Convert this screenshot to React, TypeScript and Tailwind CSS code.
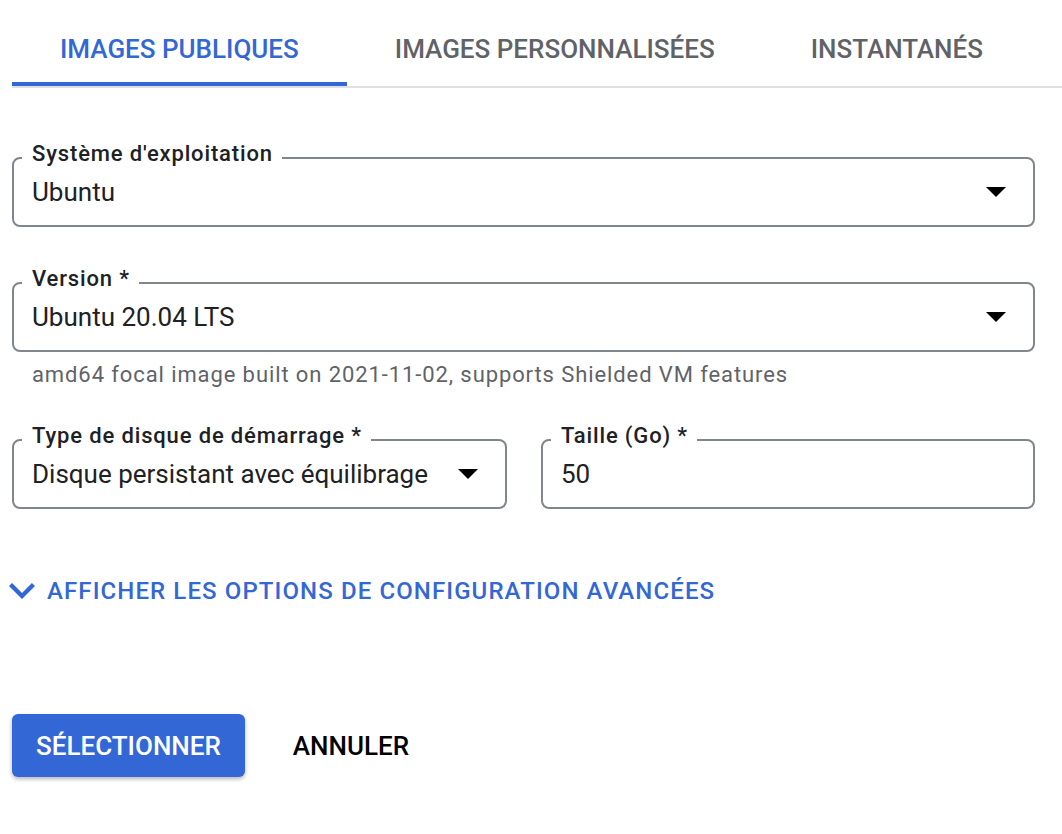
import React from "react";

function Caret() {
  return (
    <svg width="20" height="10" viewBox="0 0 20 10" className="shrink-0">
      <polygon points="0,0 20,0 10,10" fill="#000000" />
    </svg>
  );
}

function Field({ label, value, select }: { label: string; value: string; select?: boolean }) {
  return (
    <div className="relative h-[70px] rounded-[8px] border-2 border-[#80868b] flex items-center pl-[18px] pr-[27px]">
      <span className="absolute left-[8px] top-[-18px] bg-white px-[10px] pr-[9px] text-[22px] leading-[26px] tracking-[0.85px] font-medium text-[#202124] whitespace-nowrap">
        {label}
      </span>
      <span className="flex-1 text-[26px] leading-[30px] text-[#202124] whitespace-nowrap">{value}</span>
      {select && <Caret />}
    </div>
  );
}

export default function App() {
  const tabs = ["IMAGES PUBLIQUES", "IMAGES PERSONNALISÉES", "INSTANTANÉS"];
  return (
    <div className="w-[1062px] h-[834px] bg-white overflow-hidden font-['Roboto',_'Liberation_Sans',_sans-serif]">
      <div className="ml-3 flex border-b-2 border-[#e0e0e0]">
        {tabs.map((t, i) => (
          <div
            key={t}
            className={
              i === 0
                ? "px-12 pt-[34px] pb-[18px] border-b-4 border-[#3367d6] text-[26px] leading-[30px] font-medium text-[#3367d6] whitespace-nowrap"
                : "px-12 pt-[34px] pb-[18px] border-b-4 border-transparent text-[26px] leading-[30px] font-medium text-[#5f6368] whitespace-nowrap"
            }
          >
            {t}
          </div>
        ))}
      </div>

      <div className="ml-3 w-[1023px] mt-[69px] flex flex-col">
        <Field label="Système d'exploitation" value="Ubuntu" select />
        <div className="mt-[55px]">
          <Field label="Version *" value="Ubuntu 20.04 LTS" select />
        </div>
        <div className="mt-[10px] pl-5 text-[22px] leading-[26px] tracking-[0.9px] text-[#5f6368] whitespace-nowrap">
          amd64 focal image built on 2021-11-02, supports Shielded VM features
        </div>
        <div className="mt-[51px] grid grid-cols-[495px_494px] gap-x-[34px]">
          <Field label="Type de disque de démarrage *" value="Disque persistant avec équilibrage" select />
          <Field label="Taille (Go) *" value="50" />
        </div>

        <div className="mt-[68px] flex items-center">
          <svg width="26" height="16" viewBox="6 8.59 12 7.41" className="ml-[-3px] shrink-0" preserveAspectRatio="none">
            <path d="M16.59 8.59L12 13.17 7.41 8.59 6 10l6 6 6-6z" fill="#3367d6" />
          </svg>
          <span className="ml-[12px] text-[24px] leading-[28px] tracking-[1.1px] font-medium text-[#3367d6] whitespace-nowrap">
            AFFICHER LES OPTIONS DE CONFIGURATION AVANCÉES
          </span>
        </div>

        <div className="mt-[109px] flex items-center">
          <button className="h-[63px] rounded-[6px] bg-[#3367d6] px-[24px] text-[26px] leading-[30px] font-medium text-white shadow-[0_2px_4px_rgba(0,0,0,0.3)]">
            SÉLECTIONNER
          </button>
          <button className="ml-[48px] text-[26px] leading-[30px] font-medium text-black">ANNULER</button>
        </div>
      </div>
    </div>
  );
}
